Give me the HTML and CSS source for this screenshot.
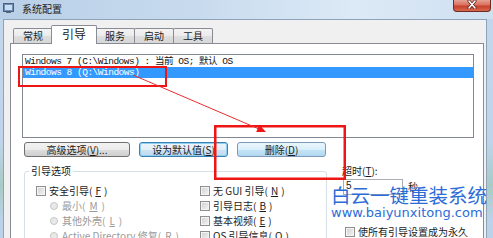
FILE: index.html
```html
<!DOCTYPE html>
<html lang="zh-CN">
<head>
<meta charset="utf-8">
<title>系统配置</title>
<link rel="stylesheet" href="styles.css">
</head>
<body>
<div class="win">
  <div class="titlebar">
    <svg class="appicon" width="11" height="10" viewBox="0 0 11 10">
      <rect x="0.5" y="0.5" width="10" height="8" fill="#6f8fb8" stroke="#4d5f78"/>
      <rect x="2" y="2" width="7" height="5" fill="#c9dcf2"/>
      <rect x="3" y="9" width="5" height="1" fill="#55657a"/>
    </svg>
    <span class="title">系统配置</span>
    <span class="close">
      <svg width="10" height="9" viewBox="0 0 10 9">
        <path d="M2 1 L8 8 M8 1 L2 8" stroke="#5a1a12" stroke-width="3" stroke-linecap="round"/>
        <path d="M2 1 L8 8 M8 1 L2 8" stroke="#ffffff" stroke-width="1.6" stroke-linecap="round"/>
      </svg>
    </span>
  </div>
  <div class="body">
    <div class="tabs">
      <div class="tab">常规</div>
      <div class="tab sel">引导</div>
      <div class="tab">服务</div>
      <div class="tab">启动</div>
      <div class="tab">工具</div>
    </div>
    <div class="panel">
      <div class="listbox">
        <div class="item">Windows 7 (C:\Windows) : 当前 OS; 默认 OS</div>
        <div class="item selitem">Windows 8 (Q:\Windows)</div>
      </div>
      <div class="btnrow">
        <div class="btn w106">高级选项(<u>V</u>)...</div>
        <div class="btn w89 def">设为默认值(<u>S</u>)</div>
        <div class="btn w89 hot">删除(<u>D</u>)</div>
      </div>
      <div class="lower">
        <fieldset class="group">
          <legend>引导选项</legend>
          <div class="opts">
            <div class="opt"><span class="cb"></span>安全引导(<u>F</u>)</div>
            <div class="opt"><span class="cb"></span>无 GUI 引导(<u>N</u>)</div>
            <div class="opt sub dis"><span class="rb"></span>最小(<u>M</u>)</div>
            <div class="opt"><span class="cb"></span>引导日志(<u>B</u>)</div>
            <div class="opt sub dis"><span class="rb"></span>其他外壳(<u>L</u>)</div>
            <div class="opt"><span class="cb"></span>基本视频(<u>E</u>)</div>
            <div class="opt sub dis"><span class="rb"></span>Active Directory 修复(<u>R</u>)</div>
            <div class="opt"><span class="cb"></span>OS 引导信息(<u>O</u>)</div>
          </div>
        </fieldset>
        <div class="side">
          <div class="tlabel">超时(<u>T</u>):</div>
          <div class="trow">
            <div class="tinput">5</div>
            <span class="sec">秒</span>
          </div>
          <div class="opt perm"><span class="cb"></span>使所有引导设置成为永久</div>
        </div>
      </div>
    </div>
  </div>

  <svg class="marks" width="493" height="238" viewBox="0 0 493 238">
    <rect x="19" y="67" width="147" height="19" fill="none" stroke="#ee1515" stroke-width="2"/>
    <rect x="215.25" y="126.25" width="129.5" height="52.5" fill="none" stroke="#ee1515" stroke-width="2.5"/>
    <line x1="133" y1="75" x2="259" y2="129" stroke="#e83030" stroke-width="1"/>
    <polygon points="266,132 256.2,132.1 259.3,124.8" fill="#ee1515"/>
  </svg>

  <div class="watermark">
    <div class="wm1">白云一键重装系统</div>
    <div class="wm2">www.baiyunxitong.com</div>
  </div>
</div>
</body>
</html>
```

FILE: styles.css
```css
html, body {
  margin: 0;
  padding: 0;
  width: 493px;
  height: 238px;
  overflow: hidden;
}
body {
  font-family: "Noto Sans CJK SC", "Liberation Sans", sans-serif;
  font-size: 10px;
  color: #1b1b1b;
}
u { text-decoration: underline; }

.win {
  position: relative;
  width: 493px;
  height: 238px;
  overflow: hidden;
  background: linear-gradient(180deg, #c3d7ec 0%, #bfd4ea 60%, #a9cbc6 78%, #bcd2e8 92%);
}

.titlebar {
  height: 19px;
  display: flex;
  align-items: flex-start;
  background: linear-gradient(90deg, #b8cfe7 0%, #c8dbee 40%, #dce9f6 72%, #cfe0f1 100%);
}
.appicon {
  margin: 3px 0 0 3px;
  flex: none;
}
.title {
  margin: 3px 0 0 8px;
  line-height: 12px;
  font-size: 10px;
  color: #1e1e1e;
}
.close {
  margin-left: auto;
  margin-right: 2px;
  width: 38px;
  height: 12px;
  box-sizing: border-box;
  border: 1px solid #6e2b21;
  border-top: none;
  border-radius: 0 0 4px 4px;
  background: linear-gradient(180deg, #e6a194 0%, #d8715e 45%, #c6412b 55%, #d8664c 100%);
  display: flex;
  justify-content: center;
  align-items: flex-start;
}

.body {
  margin: 0 6px 0 3px;
  height: 219px;
  box-sizing: border-box;
  background: #f0f0f0;
  border: 1px solid #8ea2ba;
  border-bottom: none;
  display: flex;
  flex-direction: column;
}

.tabs {
  display: flex;
  align-items: flex-end;
  height: 23px;
  box-sizing: border-box;
  padding: 5px 0 0 9px;
}
.tab {
  height: 15px;
  box-sizing: border-box;
  border: 1px solid #898c95;
  border-bottom: none;
  border-radius: 2px 2px 0 0;
  padding: 0 9px;
  margin-left: -1px;
  background: linear-gradient(180deg, #f3f3f3 0%, #ebebeb 50%, #dedede 51%, #d7d7d7 100%);
  display: flex;
  align-items: center;
  font-size: 10px;
  line-height: 12px;
}
.tab:first-child { margin-left: 0; }
.tab.sel {
  height: 19px;
  margin: 0 -1px -1px -2px;
  padding: 0 10px 2px;
  background: #ffffff;
  position: relative;
  z-index: 1;
  font-size: 12px;
}

.panel {
  flex: 1;
  margin: 0 2px 0 6px;
  border: 1px solid #898c95;
  border-bottom: none;
  background: #ffffff;
  padding: 10px 9px 0 11px;
}

.listbox {
  height: 84px;
  box-sizing: border-box;
  border: 1px solid #828790;
  background: #ffffff;
  padding-top: 1px;
}
.item {
  height: 11px;
  line-height: 11px;
  padding-left: 2px;
  font-family: "Liberation Mono", "Noto Sans CJK SC", monospace;
  font-size: 9.5px;
  letter-spacing: -0.5px;
  color: #111;
  white-space: nowrap;
}
.selitem {
  background: #3399ff;
  color: #ffffff;
}

.btnrow {
  display: flex;
  gap: 9px;
  margin-top: 4px;
  padding-left: 2px;
}
.btn {
  height: 15px;
  box-sizing: border-box;
  border: 1px solid #707070;
  border-radius: 3px;
  background: linear-gradient(180deg, #f2f2f2 0%, #ebebeb 50%, #dddddd 51%, #cfcfcf 100%);
  text-align: center;
  line-height: 13px;
  font-size: 10px;
  white-space: nowrap;
}
.w106 { width: 106px; }
.w89 { width: 89px; }
.btn.def {
  border-color: #3c7fb1;
  background: linear-gradient(180deg, #eef5fb 0%, #e1edf7 50%, #cde2f2 51%, #c1daee 100%);
  box-shadow: inset 0 0 0 1px #8fd0f2;
}
.btn.hot {
  border-color: #7a9ab8;
  background: linear-gradient(180deg, #eaf6fd 0%, #d9f0fc 50%, #c4e4f6 51%, #b2d8f0 100%);
}

.lower {
  display: flex;
  margin-top: 8px;
  padding-left: 2px;
}
.group {
  width: 303px;
  height: 90px;
  box-sizing: border-box;
  margin: 0;
  border: 1px solid #d5dfe5;
  border-radius: 3px;
  padding: 6px 0 0 11px;
  min-width: 0;
}
.group legend {
  font-size: 10px;
  line-height: 12px;
  padding: 0 2px;
  margin-left: -7px;
}
.opts {
  display: grid;
  grid-template-columns: 164px 1fr;
  grid-auto-rows: 15px;
  align-items: center;
}
.opt {
  display: flex;
  align-items: center;
  gap: 3px;
  white-space: nowrap;
  line-height: 12px;
}
.opt.sub {
  padding-left: 14px;
  gap: 4px;
}
.dis { color: #9a9a9a; }
.cb {
  width: 10px;
  height: 10px;
  box-sizing: border-box;
  border: 1px solid #8f8f8f;
  background: linear-gradient(135deg, #cfcfcf 0%, #e2e2e2 50%, #f6f6f6 100%);
  box-shadow: inset 0 0 0 1px #f4f4f4;
  flex: none;
}
.rb {
  width: 8px;
  height: 8px;
  box-sizing: border-box;
  border: 1px solid #c6c6c6;
  border-radius: 50%;
  background: #e9e9e9;
  flex: none;
}

.side {
  margin-left: 15px;
  display: flex;
  flex-direction: column;
}
.tlabel {
  line-height: 12px;
  white-space: nowrap;
}
.trow {
  display: flex;
  align-items: center;
  margin-top: 2px;
  padding-left: 1px;
}
.tinput {
  width: 60px;
  height: 16px;
  box-sizing: border-box;
  border: 1px solid #abadb3;
  background: #ffffff;
  padding-left: 2px;
  line-height: 12px;
  font-family: "Liberation Sans", sans-serif;
  font-size: 10px;
}
.sec {
  margin-left: 5px;
  line-height: 12px;
}
.perm {
  margin-top: 31px;
  padding-left: 3px;
}

.marks {
  position: absolute;
  left: 0;
  top: 0;
  pointer-events: none;
}

.watermark {
  position: absolute;
  left: 331px;
  top: 184px;
  color: #2c6cd6;
  white-space: nowrap;
}
.wm1 {
  font-family: "Noto Sans CJK SC", sans-serif;
  font-size: 19.5px;
  line-height: 21px;
}
.wm2 {
  font-family: "DejaVu Sans", sans-serif;
  font-size: 13px;
  line-height: 15px;
}
```
